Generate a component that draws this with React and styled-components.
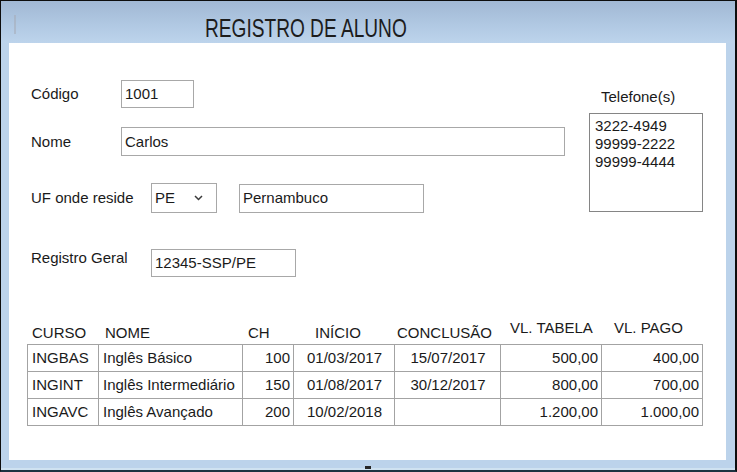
import React from "react";
import styled, { createGlobalStyle } from "styled-components";

const GlobalStyle = createGlobalStyle`
  html, body {
    margin: 0;
    padding: 0;
    background: #ffffff;
  }
  body {
    font-family: "Liberation Sans", Arial, sans-serif;
  }
  #root {
    width: 737px;
    height: 472px;
  }
`;

const Window = styled.div`
  box-sizing: border-box;
  width: 737px;
  height: 472px;
  display: flex;
  flex-direction: column;
  background: #bcd3eb;
  border-top: 1px solid #0d0d0d;
  border-left: 1px solid #0d0d0d;
  border-right: 2px solid #0d0d0d;
  border-bottom: 2px solid #1b3340;
  overflow: hidden;
`;

const TitleBar = styled.div`
  height: 42px;
  flex: none;
  display: flex;
  align-items: flex-start;
  padding-left: 13px;
  background: linear-gradient(to bottom, #a1b8d4 0%, #b0c8e2 55%, #bdd4ec 100%);
`;

const TitleMark = styled.span`
  flex: none;
  width: 2px;
  height: 19px;
  margin-top: 14px;
  background: rgba(165, 172, 182, 0.55);
`;

const Title = styled.h1`
  margin: 12px 0 0 189px;
  font-size: 26px;
  font-weight: 400;
  line-height: 30px;
  color: #1c1c1c;
  white-space: nowrap;
  transform: scaleX(0.735);
  transform-origin: left center;
`;

const Middle = styled.div`
  height: 417px;
  flex: none;
  display: flex;
  padding: 0 9px 0 8px;
`;

const Client = styled.div`
  flex: 1;
  background: #ffffff;
  color: #1a1a1a;
  font-size: 15px;
  line-height: 18px;
`;

const BottomFrame = styled.div`
  height: 10px;
  flex: none;
  display: flex;
  justify-content: center;
  align-items: flex-end;
  box-shadow: inset 0 -2px 0 #cfe2f1;
`;

const Grip = styled.span`
  width: 6px;
  height: 3px;
  margin-bottom: 1px;
  background: #262626;
`;

const TopSection = styled.div`
  display: flex;
`;

const FormColumn = styled.div`
  box-sizing: border-box;
  width: 580px;
  flex: none;
  display: flex;
  flex-direction: column;
  padding: 37px 0 0 22px;
`;

const FieldRow = styled.div`
  display: flex;
  align-items: center;
  margin-top: ${p => p.mt || 0}px;
`;

const Label = styled.span`
  flex: none;
  width: ${p => p.w}px;
  white-space: nowrap;
  align-self: ${p => (p.top ? "flex-start" : "auto")};
`;

const TextBox = styled.div`
  box-sizing: border-box;
  flex: none;
  width: ${p => p.w}px;
  height: ${p => p.h || 28}px;
  margin-left: ${p => p.ml || 0}px;
  display: flex;
  align-items: center;
  padding: 0 3px;
  border: 1px solid #a8a8a8;
  background: #ffffff;
  white-space: nowrap;
`;

const Combo = styled(TextBox)`
  justify-content: space-between;
  padding-right: 13px;
`;

const Chevron = () => (
  <svg width="9" height="6" viewBox="0 0 9 6">
    <polyline points="1,1 4.5,4.5 8,1" fill="none" stroke="#3a3a3a" strokeWidth="1.5" />
  </svg>
);

const PhonePanel = styled.div`
  width: 114px;
  flex: none;
  display: flex;
  flex-direction: column;
  padding-top: 45px;
`;

const PhoneLabel = styled.span`
  padding-left: 12px;
  white-space: nowrap;
`;

const PhoneList = styled.div`
  box-sizing: border-box;
  height: 99px;
  margin-top: 7px;
  padding: 3px 5px;
  border: 1px solid #858585;
  display: flex;
  flex-direction: column;
`;

const TableSection = styled.div`
  padding-left: 18px;
  margin-top: 42px;
`;

const COLS = "71px 144px 51px 101px 106px 101px 101px";

const HeaderRow = styled.div`
  display: grid;
  grid-template-columns: ${COLS};
  height: 23px;
`;

const HeaderCell = styled.span`
  padding-left: ${p => p.pl}px;
  padding-top: ${p => (p.lift ? 0 : 5)}px;
  white-space: nowrap;
`;

const Grid = styled.div`
  display: grid;
  grid-template-columns: ${COLS};
  width: max-content;
  margin-top: 2px;
  border-left: 1px solid #a3a3a3;
  border-top: 1px solid #a3a3a3;
`;

const Cell = styled.div`
  box-sizing: border-box;
  height: 27px;
  display: flex;
  align-items: center;
  justify-content: ${p => p.align};
  padding: 0 3px 0 4px;
  border-right: 1px solid #a3a3a3;
  border-bottom: 1px solid #a3a3a3;
  white-space: nowrap;
`;

const columns = [
  { title: "CURSO", pl: 5, align: "flex-start" },
  { title: "NOME", pl: 7, align: "flex-start" },
  { title: "CH", pl: 6, align: "flex-end" },
  { title: "INÍCIO", pl: 22, align: "center" },
  { title: "CONCLUSÃO", pl: 3, align: "center" },
  { title: "VL. TABELA", pl: 10, align: "flex-end", lift: true },
  { title: "VL. PAGO", pl: 13, align: "flex-end", lift: true },
];

const courses = [
  ["INGBAS", "Inglês Básico", "100", "01/03/2017", "15/07/2017", "500,00", "400,00"],
  ["INGINT", "Inglês Intermediário", "150", "01/08/2017", "30/12/2017", "800,00", "700,00"],
  ["INGAVC", "Inglês Avançado", "200", "10/02/2018", "", "1.200,00", "1.000,00"],
];

const phones = ["3222-4949", "99999-2222", "99999-4444"];

export default function App() {
  return (
    <>
      <GlobalStyle />
      <Window>
        <TitleBar>
          <TitleMark />
          <Title>REGISTRO DE ALUNO</Title>
        </TitleBar>
        <Middle>
          <Client>
            <TopSection>
              <FormColumn>
                <FieldRow>
                  <Label w={90}>Código</Label>
                  <TextBox w={73}>1001</TextBox>
                </FieldRow>
                <FieldRow mt={19}>
                  <Label w={90}>Nome</Label>
                  <TextBox w={444} h={29}>Carlos</TextBox>
                </FieldRow>
                <FieldRow mt={27}>
                  <Label w={120}>UF onde reside</Label>
                  <Combo w={66} h={30}>
                    <span>PE</span>
                    <Chevron />
                  </Combo>
                  <TextBox w={185} h={29} ml={22}>Pernambuco</TextBox>
                </FieldRow>
                <FieldRow mt={36}>
                  <Label w={120} top>Registro Geral</Label>
                  <TextBox w={145}>12345-SSP/PE</TextBox>
                </FieldRow>
              </FormColumn>
              <PhonePanel>
                <PhoneLabel>Telefone(s)</PhoneLabel>
                <PhoneList>
                  {phones.map(p => (
                    <span key={p}>{p}</span>
                  ))}
                </PhoneList>
              </PhonePanel>
            </TopSection>
            <TableSection>
              <HeaderRow>
                {columns.map(c => (
                  <HeaderCell key={c.title} pl={c.pl} lift={c.lift}>
                    {c.title}
                  </HeaderCell>
                ))}
              </HeaderRow>
              <Grid>
                {courses.map(row =>
                  row.map((value, i) => (
                    <Cell key={row[0] + i} align={columns[i].align}>
                      {value}
                    </Cell>
                  ))
                )}
              </Grid>
            </TableSection>
          </Client>
        </Middle>
        <BottomFrame>
          <Grip />
        </BottomFrame>
      </Window>
    </>
  );
}
